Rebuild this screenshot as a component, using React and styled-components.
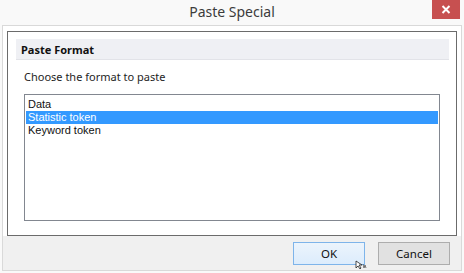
import React from 'react';
import styled, { createGlobalStyle } from 'styled-components';

const GlobalStyle = createGlobalStyle`
html, body {
    margin:0;
    padding:0;
    background:#f9f9f9;
    font-family:"Noto Sans", "Open Sans", sans-serif;
}
`;

//Whole dialog window, title bar on top and the framed body under it
const Window = styled.div`
width:464px;
height:273px;
display:flex;
flex-direction:column;
background:#f9f9f9;
overflow:hidden;
`;

const TitleBar = styled.div`
height:25px;
position:relative;
display:flex;
align-items:center;
justify-content:center;

h1{
    margin:0;
    font-size:14px;
    font-weight:400;
    color:#3c3c3c;
    line-height:1;
    margin-top:-1px;
}
`;

//Red close button sits over the right end of the title bar
const CloseButton = styled.div`
position:absolute;
top:0;
right:4px;
width:28px;
height:19px;
background:#c75050;
display:flex;
align-items:center;
justify-content:center;
`;

const Frame = styled.div`
flex:1;
margin:0 2px 2px;
border:1px solid #d9d9d9;
background:#fff;
display:flex;
flex-direction:column;
`;

const FrameBody = styled.div`
padding:5px 4px 0 4px;
background:#fff;
`;

//Dark bordered panel that holds the header, the label and the list
const Panel = styled.div`
border:1px solid #6b6b6b;
padding:7px 7px 0 8px;
box-sizing:border-box;
height:205px;
`;

const PanelHeader = styled.div`
height:20px;
background:#eff0f4;
border-bottom:1px solid #e2e3e8;
display:flex;
align-items:center;
padding-left:5px;
font-size:11px;
font-weight:700;
color:#111;
`;

const Content = styled.div`
padding:0 8px 0 8px;

p{
    margin:9px 0 0;
    font-size:11px;
    color:#1e1e1e;
    line-height:15px;
}
`;

const ListBox = styled.div`
margin-top:10px;
width:416px;
height:127px;
box-sizing:border-box;
border:1px solid #828790;
padding:3px 1px;
`;

const ListItem = styled.div`
height:13px;
line-height:13px;
font-family:"Liberation Sans", Arial, sans-serif;
font-size:11px;
padding-left:2px;
color:${p => p.selected ? '#fff' : '#111'};
background:${p => p.selected ? '#3399ff' : 'transparent'};
`;

const Footer = styled.div`
flex:1;
background:#f0f0f0;
display:flex;
justify-content:flex-end;
align-items:flex-start;
gap:13px;
padding:6px 11px 0 0;
position:relative;
`;

const Button = styled.div`
width:72px;
height:23px;
box-sizing:border-box;
display:flex;
align-items:center;
justify-content:center;
font-size:11.5px;
color:#111;
border:1px solid ${p => p.primary ? '#7eb4ea' : '#adadad'};
background:${p => p.primary ? 'linear-gradient(#ecf4fc, #dcecfc)' : '#e1e1e1'};
`;

//Mouse pointer resting under the OK button
const Pointer = styled.svg`
position:absolute;
left:352px;
top:24px;
`;

const items = ['Data', 'Statistic token', 'Keyword token'];

const App = () => {
    return (
        <Window>
            <GlobalStyle />
            <TitleBar>
                <h1>Paste Special</h1>
                <CloseButton>
                    <svg width="10" height="9" viewBox="0 0 10 9">
                        <path d="M1.5 1 L8.5 8 M8.5 1 L1.5 8" stroke="#fff" strokeWidth="2" />
                    </svg>
                </CloseButton>
            </TitleBar>
            <Frame>
                <FrameBody>
                    <Panel>
                        <PanelHeader>Paste Format</PanelHeader>
                        <Content>
                            <p>Choose the format to paste</p>
                            <ListBox>
                                {items.map((item, i) => (
                                    <ListItem key={item} selected={i === 1}>{item}</ListItem>
                                ))}
                            </ListBox>
                        </Content>
                    </Panel>
                </FrameBody>
                <Footer>
                    <Button primary>OK</Button>
                    <Button>Cancel</Button>
                    <Pointer width="12" height="10" viewBox="0 0 12 10">
                        <path d="M1 1 L1 8 L3 6 L5 9 L6 8 L4 5 L7 5 Z" fill="#fff" stroke="#222" strokeWidth="0.8" />
                        <path d="M8 4 L9 8 L10 5 L11 8" fill="none" stroke="#444" strokeWidth="0.7" />
                    </Pointer>
                </Footer>
            </Frame>
        </Window>
    );
}

export default App
